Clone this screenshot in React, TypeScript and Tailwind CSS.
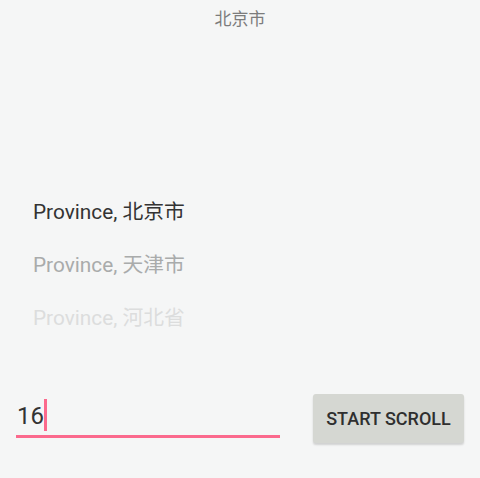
import React from "react";

const items = [
  { name: "北京市", color: "text-[#333333]" },
  { name: "天津市", color: "text-[#a9abab]" },
  { name: "河北省", color: "text-[#dcdddd]" },
];

const App: React.FC = () => {
  return (
    <div
      className="w-[480px] h-[478px] bg-[#f5f6f6] flex flex-col overflow-hidden"
      style={{ fontFamily: "Roboto, 'Noto Sans CJK SC', sans-serif" }}
    >
      {/* title */}
      <div className="h-[40px] flex items-center justify-center text-[17px] text-[#7c7c7c]">
        北京市
      </div>

      {/* picker list */}
      <div className="mt-[146px] flex flex-col pl-[33px]">
        {items.map((item) => (
          <div
            key={item.name}
            className={`h-[53px] flex items-center text-[20.8px] ${item.color}`}
          >
            Province, {item.name}
          </div>
        ))}
      </div>

      {/* bottom row */}
      <div className="mt-[49px] flex items-start justify-between pl-[16px] pr-[16px]">
        <div className="w-[264px] h-[44px] border-b-[3px] border-[#fb6a8d] flex items-end pb-[4px] pl-[1px]">
          <span className="text-[24px] leading-[30px] text-[#333333]">16</span>
          <span className="ml-0 w-[3px] h-[32px] bg-[#fb6a8d]" />
        </div>
        <button className="w-[151px] h-[49px] rounded-[3px] bg-[#d5d7d2] shadow-[0_2px_2px_rgba(0,0,0,0.15)] text-[18px] font-medium text-[#2f2f2f]">
          START SCROLL
        </button>
      </div>
    </div>
  );
};

export default App;
